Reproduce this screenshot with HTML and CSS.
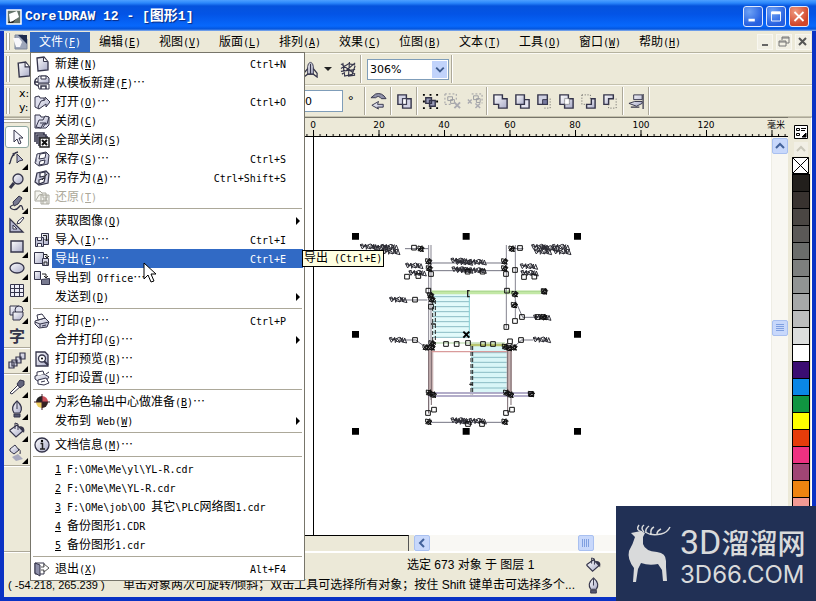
FILE: index.html
```html
<!DOCTYPE html>
<html lang="zh-CN">
<head>
<meta charset="utf-8">
<title>CorelDRAW 12 - [图形1]</title>
<link rel="stylesheet" href="styles.css">
</head>
<body>
<svg class="symbols" aria-hidden="true">
  <defs>
    <linearGradient id="metal" x1="0" y1="0" x2="1" y2="1"><stop offset="0" stop-color="#fff"/><stop offset="1" stop-color="#a9abc8"/></linearGradient>
  </defs>
  <symbol id="i-new" viewBox="0 0 16 16"><path d="M3 2l7-1 4 5v8l-10 1z" fill="url(#metal)" stroke="#34344a" stroke-width="1.300"/><path d="M9.500 1.500v4h4" fill="#fff" stroke="#34344a"/></symbol>
  <symbol id="i-template" viewBox="0 0 16 16"><path d="M5 1h8l2 2v5H4V2z" fill="url(#metal)" stroke="#34344a"/><path d="M7 1h5v3H7zM4 9h11v5H5z" fill="#fff" stroke="#34344a"/><path d="M7 14v-3h5v3M3 3Q0 5 1 9l3 2M1 7h3" fill="none" stroke="#34344a" stroke-width="1.500"/></symbol>
  <symbol id="i-open" viewBox="0 0 16 16"><path d="M1 3l4-1 1 2h4v4L5 15 1 13z" fill="#dedfee" stroke="#34344a"/><path d="M4 13L7 7l4-1V3l5 5-4 5v-3L5 15z" fill="url(#metal)" stroke="#34344a"/></symbol>
  <symbol id="i-close" viewBox="0 0 16 16"><path d="M1 2h5l1 2h8v8l-3 3H1z" fill="#dedfee" stroke="#34344a"/><path d="M2 14L5 7h4l2-4 4 1-2 7H9l-2 4z" fill="url(#metal)" stroke="#34344a"/><path d="M6 10h6l-3 4" fill="none" stroke="#34344a"/></symbol>
  <symbol id="i-closeall" viewBox="0 0 16 16"><path d="M1 10V1h9v2M3 12V3h9v2M5 14V5h9" fill="none" stroke="#34344a" stroke-width="1.600"/><path d="M6 6h9v9H6z" fill="#fff" stroke="#222" stroke-width="1.500"/><path d="M8 8l5 5M13 8l-5 5" stroke="#111" stroke-width="2"/></symbol>
  <symbol id="i-save" viewBox="0 0 16 16"><path d="M3 3l9-2 3 3-1 9-9 2-4-3z" fill="url(#metal)" stroke="#34344a"/><path d="M6 3l6-1-1 5-6 1zM6 10l5-1-1 4-5 1z" fill="#fff" stroke="#34344a"/><path d="M3 4L2 11" stroke="#77788f"/></symbol>
  <symbol id="i-saveas" viewBox="0 0 16 16"><path d="M3 3l9-2 3 3-1 9-9 2-4-3z" fill="#d0d1e2" stroke="#34344a" stroke-width="1.200"/><path d="M6 3l5-1v4l-5 1zM5 10l6-2-1 4-5 2z" fill="#fff" stroke="#34344a" stroke-width="1.200"/><path d="M8 10l5-6" stroke="#222"/></symbol>
  <symbol id="i-revert" viewBox="0 0 16 16"><path d="M1 2h5l2 2h4v8H1zM7 6h8v9H7zM9 6v3h4V6M9 15v-4h4v4M2 11l3-5 4-1" fill="#f3f3ee" stroke="#aaa99f"/></symbol>
  <symbol id="i-import" viewBox="0 0 16 16"><path d="M7.500 1.500h7v11h-7z" fill="url(#metal)" stroke="#34344a"/><path d="M1.500 5.500h8v9h-8z" fill="#c4c5d9" stroke="#34344a"/><path d="M3.500 5.500v3h4v-3M3.500 14.500v-3h4v3" fill="#fff" stroke="#34344a"/><path d="M9 3.500h3.500V9M10.500 7l2 2 2-2" fill="none" stroke="#222"/></symbol>
  <symbol id="i-export" viewBox="0 0 16 16"><path d="M.5 1.500h9v11h-9z" fill="url(#metal)" stroke="#34344a"/><path d="M8.500 7.500h6v7h-6z" fill="#d9d9e8" stroke="#34344a"/><path d="M10 14v-3h3v3M10 3.500h3V7M11 5l2 2 2-2" fill="none" stroke="#222"/></symbol>
  <symbol id="i-office" viewBox="0 0 16 16"><path d="M.5 1.500h6v8h-6z" fill="url(#metal)" stroke="#34344a"/><path d="M7.500 9.500l8-1v6h-8z" fill="#77798f" stroke="#34344a"/><path d="M8 4h4v3M10 6l2 2 2-2" fill="none" stroke="#222"/></symbol>
  <symbol id="i-print" viewBox="0 0 16 16"><path d="M1 8l10-3 4 4-2 5-8 1-4-4z" fill="url(#metal)" stroke="#34344a"/><path d="M4 7L3 2l5-1 3 4z" fill="#fff" stroke="#34344a"/><path d="M1 9l5 2 9-2M6 11v3M8 13l4-1" fill="none" stroke="#34344a"/></symbol>
  <symbol id="i-preview" viewBox="0 0 16 16"><path d="M2 1h9l3 3v11H2z" fill="url(#metal)" stroke="#34344a" stroke-width="1.300"/><circle cx="8" cy="7.500" r="3.500" fill="#fff" stroke="#34344a" stroke-width="1.300"/><path d="M10 10l4 4" stroke="#34344a" stroke-width="2"/><circle cx="8" cy="7.500" r="1"/></symbol>
  <symbol id="i-setup" viewBox="0 0 16 16"><path d="M1 6l9-2 5 3-3 4-7 1-4-3z" fill="url(#metal)" stroke="#34344a"/><path d="M3 6V2l6-1 1 3M4 10l8-2 3 5-5 2-6-1z" fill="#fff" stroke="#34344a"/><path d="M12 4l3-2M7 12l4-1" stroke="#34344a"/></symbol>
  <symbol id="i-color" viewBox="0 0 16 16"><circle cx="8" cy="8" r="5.500" fill="#fff"/><path d="M8 8V2a6 6 0 00-6 6z" fill="#222"/><path d="M8 8V2a6 6 0 016 6z" fill="#c94f58"/><path d="M8 8v6a6 6 0 006-6z" fill="#322"/><path d="M8 8v6a6 6 0 01-6-6z" fill="#edcf62"/><path d="M8 0v16M0 8h16" stroke="#42202a"/></symbol>
  <symbol id="i-info" viewBox="0 0 16 16"><circle cx="8" cy="8" r="7" fill="url(#metal)" stroke="#34344a" stroke-width="1.300"/><path d="M6.500 6.500h2V12M6 12h5" fill="none" stroke="#222" stroke-width="1.500"/><circle cx="8" cy="4" r="1.200"/></symbol>
  <symbol id="i-exit" viewBox="0 0 16 16"><path d="M1 2h9v11H1z" fill="#fff" stroke="#34344a"/><path d="M1 2l5 2v11l-5-3z" fill="#8d8fa9" stroke="#34344a"/><path d="M7 6h3V3l5 4-5 4V9H7" fill="#fff" stroke="#555"/></symbol>
  <symbol id="t-pick" viewBox="0 0 18 18"><path d="M6 2v12l3-3 2 5 2-1-2-5h4z" fill="#f4f4fb" stroke="#34344a"/></symbol>
  <symbol id="t-shape" viewBox="0 0 18 18"><path d="M2 13Q4 3 10 2M2 13l-1 1M6 6L5 3" fill="none" stroke="#34344a" stroke-width="1.300"/><path d="M9 4v9l2-2 4-1z" fill="#b5b7cf" stroke="#34344a"/></symbol>
  <symbol id="t-zoom" viewBox="0 0 18 18"><path d="M2 16l4-5" stroke="#34344a" stroke-width="3"/><circle cx="10" cy="7" r="5" fill="url(#metal)" stroke="#34344a" stroke-width="1.300"/></symbol>
  <symbol id="t-draw" viewBox="0 0 18 18"><path d="M5 8l6-6 3 2-4 6-4 2z" fill="#777990" stroke="#34344a"/><path d="M5 11q-5 2-1 4t7-2 4 3" fill="none" stroke="#34344a" stroke-width="1.300"/></symbol>
  <symbol id="t-smart" viewBox="0 0 18 18"><path d="M2 3v13h13z" fill="#b5b7cf" stroke="#34344a" stroke-width="1.300"/><path d="M5 9v4h4zM9 8l1-3 5-4 1 1-4 5z" fill="#fff" stroke="#34344a"/></symbol>
  <symbol id="t-rect" viewBox="0 0 18 18"><path d="M3 3h12v11H3z" fill="url(#metal)" stroke="#34344a" stroke-width="1.400"/></symbol>
  <symbol id="t-ellipse" viewBox="0 0 18 18"><ellipse cx="9" cy="8" rx="7" ry="5" fill="url(#metal)" stroke="#34344a" stroke-width="1.300"/></symbol>
  <symbol id="t-grid" viewBox="0 0 18 18"><path d="M2 2h13v13H2z" fill="#eeeef8"/><path d="M2.500 2.500h13v12h-13zM2 6.500h13M2 10.500h13M6.500 2v13M11.500 2v13" fill="none" stroke="#34344a"/></symbol>
  <symbol id="t-basic" viewBox="0 0 18 18"><path d="M2 2h9v9H2z" fill="url(#metal)" stroke="#34344a"/><circle cx="11" cy="6" r="4" fill="#dedfec" stroke="#34344a"/><path d="M5 8h10v4l-3 4H5z" fill="url(#metal)" stroke="#34344a"/></symbol>
  <symbol id="t-blend" viewBox="0 0 18 18"><path d="M1 10h5v6H1zM4 8h5v6H4zM8 5h5v6H8zM12 1h5v6h-5z" fill="url(#metal)" stroke="#34344a" stroke-width="1.200"/></symbol>
  <symbol id="t-dropper" viewBox="0 0 18 18"><path d="M2 15l9-9 2 2-9 8z" fill="#fff" stroke="#34344a"/><path d="M9 6l3-4 4 1v4l-4 3z" fill="#62647d" stroke="#34344a"/></symbol>
  <symbol id="t-pen" viewBox="0 0 18 18"><path d="M9 1Q2 7 6 13h6q4-6-3-12z" fill="url(#metal)" stroke="#34344a" stroke-width="1.200"/><path d="M9 2v7M6 14h6v3H6z" fill="#555870" stroke="#34344a"/></symbol>
  <symbol id="t-fill" viewBox="0 0 18 18"><path d="M2 8l7-5 6 6-7 6-6-6z" fill="url(#metal)" stroke="#34344a" stroke-width="1.200"/><path d="M7 7V1l3 1v6" fill="none" stroke="#34344a"/><path d="M11 4q7 0 5 7l-3-4z" fill="#34344a"/></symbol>
  <symbol id="t-ifill" viewBox="0 0 18 18"><path d="M2 5l5-4 4 5-5 4-4-3z" fill="url(#metal)" stroke="#34344a"/><path d="M10 5q3 0 2 5" fill="none" stroke="#34344a"/><path d="M4 13l6-3 5 5-7 2z" fill="#a7a9be"/></symbol>
  <symbol id="b-rocket" viewBox="0 0 18 18"><path d="M6 14V6q0-3 3-5 3 2 3 5v8z" fill="url(#metal)" stroke="#34344a"/><path d="M6 8l-4 5v4l4-3h6l4 3v-4l-4-5M9 3v11" fill="none" stroke="#34344a" stroke-width="1.300"/></symbol>
  <symbol id="b-web" viewBox="0 0 18 18"><path d="M1 3l15 11M2 14L16 2M1 8l8-5 7 1M3 2l2 14 8-2 3-9M10 1l-1 15 7-1M1 11l15-2" fill="none" stroke="#34344a" stroke-width="1.200"/></symbol>
  <symbol id="b-mirror" viewBox="0 0 18 18"><path d="M1 5l5-4q7-2 11 5h-5Q9 2 6 5z" fill="#8f91a8" stroke="#34344a"/><path d="M2 13l7-4-1 3h6v3H8l1 2z" fill="url(#metal)" stroke="#34344a"/></symbol>
  <symbol id="b-combine" viewBox="0 0 18 18"><path d="M2 2h9v10H2zM7 6h9v10H7z" fill="#d2d3e4" stroke="#34344a" stroke-width="1.500"/><path d="M7 6h4v6H7z" fill="#fff" stroke="#34344a"/></symbol>
  <symbol id="b-group" viewBox="0 0 18 18"><path d="M4 5h6v6H4zM8 8h6v6H8z" fill="#9a9cb8" stroke="#34344a" stroke-width="1.500"/><path d="M1 1h2v2H1zM8 1h2v2H8zM15 1h2v2h-2zM1 8h2v2H1zM15 8h2v2h-2zM1 15h2v2H1zM8 15h2v2H8zM15 15h2v2h-2z"/></symbol>
  <symbol id="b-ungroup" viewBox="0 0 18 18"><path d="M4 4h5v4H4zM7 7h4v4H7z" fill="none" stroke="#999aa0"/><path d="M1 1h12M1 12h8M1 1v11M13 1v7" stroke="#999aa0" stroke-dasharray="2 2" fill="none"/><path d="M11 10l6 6M17 10l-6 6" stroke="#aaaab0" stroke-width="2"/></symbol>
  <symbol id="b-ungroupall" viewBox="0 0 18 18"><path d="M8 3h5v4H8zM11 6h4v4h-4z" fill="none" stroke="#999aa0"/><path d="M6 1h11v10" stroke="#999aa0" stroke-dasharray="2 2" fill="none"/><path d="M2 7l4 4M6 7l-4 4M10 11l5 5M15 11l-5 5" stroke="#aaaab0" stroke-width="1.500"/></symbol>
  <symbol id="b-weld" viewBox="0 0 18 18"><path d="M2 2h9v4h5v10H7v-4H2z" fill="url(#metal)" stroke="#34344a" stroke-width="1.500"/></symbol>
  <symbol id="b-trim" viewBox="0 0 18 18"><path d="M7 7h9v9H7z" fill="#e4e4f0" stroke="#34344a" stroke-width="1.500"/><path d="M2 2h9v10H2z" fill="url(#metal)" stroke="#34344a" stroke-width="1.500"/></symbol>
  <symbol id="b-intersect" viewBox="0 0 18 18"><path d="M2 2h10v10H2z" fill="#cfd0e2" stroke="#34344a" stroke-width="1.500"/><path d="M7 7h5v5H7z" fill="#777aa0" stroke="#34344a"/><path d="M15 6v10H7" fill="none" stroke="#555" stroke-dasharray="1 2"/></symbol>
  <symbol id="b-simplify" viewBox="0 0 18 18"><path d="M2 2h9v4h5v10H7v-4H2z" fill="url(#metal)" stroke="#34344a" stroke-width="1.500"/><path d="M7 12V6h5v6z" fill="#fff" stroke="#555" stroke-dasharray="1 1"/></symbol>
  <symbol id="b-front" viewBox="0 0 18 18"><path d="M2 2h9v4M2 2v10h4" fill="none" stroke="#555" stroke-dasharray="1 2"/><path d="M12 6h4v10H7v-4h5z" fill="url(#metal)" stroke="#34344a" stroke-width="1.500"/></symbol>
  <symbol id="b-back" viewBox="0 0 18 18"><path d="M2 2h10v4H7v6H2z" fill="url(#metal)" stroke="#34344a" stroke-width="1.500"/><path d="M15 6v10H7v-4" fill="none" stroke="#555" stroke-dasharray="1 2"/></symbol>
  <symbol id="b-align" viewBox="0 0 18 18"><path d="M6 2h9v5H6zM1 11l6-2h8v2l-6 3z" fill="url(#metal)" stroke="#34344a"/><path d="M16 1v16M3 15h9" stroke="#34344a" stroke-width="1.300"/></symbol>
</svg>

<div class="window">
  <header class="titlebar">
    <svg class="app-icon" viewBox="0 0 16 16" aria-hidden="true"><path d="M1 1h14v14H1z" fill="#66746c" stroke="#fff" stroke-width="1.500"/><path d="M2 14l4-5 4 1-3 4z" fill="#222"/><path d="M3 5l8-3 2 6-6 4-3 1z" fill="#fff"/></svg>
    <h1>CorelDRAW 12 - [<span class="title-cjk">图形</span>1]</h1>
    <div class="caption-buttons">
      <button aria-label="最小化"><svg viewBox="0 0 20 20"><path d="M5 14h7" stroke="#fff" stroke-width="3"/></svg></button>
      <button aria-label="最大化"><svg viewBox="0 0 20 20"><path d="M5 5h10v10H5z" fill="none" stroke="#fff"/><path d="M5 6h10" stroke="#fff" stroke-width="3"/></svg></button>
      <button class="quit" aria-label="关闭"><svg viewBox="0 0 20 20"><path d="M5 5l10 10M15 5L5 15" stroke="#fff" stroke-width="2"/></svg></button>
    </div>
  </header>

  <div class="frame">
    <nav class="menubar" aria-label="主菜单">
      <span class="grip"></span>
      <svg class="doc-icon" viewBox="0 0 16 16" aria-hidden="true"><path d="M3 1h8l4 4v10H3z" fill="#9da6ba" stroke="#7d879b"/><path d="M6 1h9v9z" fill="#1f2c4e"/><path d="M1 4h6l3 4-2 5H4z" fill="#f7f7fb"/></svg>
      <button class="active">文件<i>(<u>F</u>)</i></button>
      <button>编辑<i>(<u>E</u>)</i></button>
      <button>视图<i>(<u>V</u>)</i></button>
      <button>版面<i>(<u>L</u>)</i></button>
      <button>排列<i>(<u>A</u>)</i></button>
      <button>效果<i>(<u>C</u>)</i></button>
      <button>位图<i>(<u>B</u>)</i></button>
      <button>文本<i>(<u>T</u>)</i></button>
      <button>工具<i>(<u>O</u>)</i></button>
      <button>窗口<i>(<u>W</u>)</i></button>
      <button>帮助<i>(<u>H</u>)</i></button>
      <div class="doc-buttons">
        <button aria-label="最小化文档"><svg viewBox="0 0 14 14"><path d="M4 10h6" stroke="#666" stroke-width="2"/></svg></button>
        <button aria-label="还原文档"><svg viewBox="0 0 14 14"><path d="M5 5V2h7v6H9M5 3h7M2 6h7v5H2zM2 7h7" fill="none" stroke="#777"/></svg></button>
        <button aria-label="关闭文档"><svg viewBox="0 0 14 14"><path d="M3 3l7 7M10 3l-7 7" stroke="#555" stroke-width="2"/></svg></button>
      </div>
    </nav>

    <div class="toolbar standard" role="toolbar" aria-label="标准">
      <span class="grip"></span>
      <button class="tb" aria-label="新建"><svg><use href="#i-new"/></svg></button>
      <span class="covered"></span>
      <button class="tb" aria-label="应用程序启动器"><svg><use href="#b-rocket"/></svg></button>
      <span class="caret"></span>
      <button class="tb" aria-label="CorelDRAW 网上社区"><svg><use href="#b-web"/></svg></button>
      <span class="rule"></span>
      <span class="zoom-level"><select aria-label="缩放级别"><option>306%</option></select><svg viewBox="0 0 15 18" aria-hidden="true"><path d="M4 7l4 4 4-4" fill="none" stroke="#3c5a8c" stroke-width="2"/></svg></span>
      <span class="rule end"></span>
    </div>

    <div class="toolbar property" role="toolbar" aria-label="属性栏">
      <span class="grip"></span>
      <span class="coords"><span>x:</span><span>y:</span></span>
      <span class="covered"></span>
      <input type="text" id="angle" value="0" aria-label="旋转角度"><label for="angle">°</label>
      <span class="rule"></span>
      <button class="tb" aria-label="镜像"><svg><use href="#b-mirror"/></svg></button>
      <span class="rule"></span>
      <button class="tb" aria-label="结合"><svg><use href="#b-combine"/></svg></button>
      <span class="rule"></span>
      <button class="tb" aria-label="群组"><svg><use href="#b-group"/></svg></button>
      <button class="tb" aria-label="取消群组" disabled><svg><use href="#b-ungroup"/></svg></button>
      <button class="tb" aria-label="取消全部群组" disabled><svg><use href="#b-ungroupall"/></svg></button>
      <span class="rule"></span>
      <button class="tb" aria-label="焊接"><svg><use href="#b-weld"/></svg></button>
      <button class="tb" aria-label="修剪"><svg><use href="#b-trim"/></svg></button>
      <button class="tb" aria-label="相交"><svg><use href="#b-intersect"/></svg></button>
      <button class="tb" aria-label="简化"><svg><use href="#b-simplify"/></svg></button>
      <button class="tb" aria-label="前减后"><svg><use href="#b-front"/></svg></button>
      <button class="tb" aria-label="后减前"><svg><use href="#b-back"/></svg></button>
      <span class="rule"></span>
      <button class="tb" aria-label="对齐"><svg><use href="#b-align"/></svg></button>
      <span class="rule end"></span>
    </div>

    <main class="workspace">
      <aside class="toolbox" aria-label="工具箱">
        <span class="grip-top"></span>
        <button class="selected" aria-label="挑选"><svg><use href="#t-pick"/></svg></button>
        <button class="fly" aria-label="形状"><svg><use href="#t-shape"/></svg></button>
        <button class="fly" aria-label="缩放"><svg><use href="#t-zoom"/></svg></button>
        <button class="fly" aria-label="手绘"><svg><use href="#t-draw"/></svg></button>
        <button aria-label="智能绘图"><svg><use href="#t-smart"/></svg></button>
        <button class="fly" aria-label="矩形"><svg><use href="#t-rect"/></svg></button>
        <button class="fly" aria-label="椭圆"><svg><use href="#t-ellipse"/></svg></button>
        <button class="fly" aria-label="图纸"><svg><use href="#t-grid"/></svg></button>
        <button class="fly" aria-label="基本形状"><svg><use href="#t-basic"/></svg></button>
        <button class="glyph" aria-label="文本">字</button>
        <hr>
        <button class="fly" aria-label="调和"><svg><use href="#t-blend"/></svg></button>
        <hr>
        <button class="fly" aria-label="滴管"><svg><use href="#t-dropper"/></svg></button>
        <button class="fly" aria-label="轮廓"><svg><use href="#t-pen"/></svg></button>
        <button class="fly" aria-label="填充"><svg><use href="#t-fill"/></svg></button>
        <button class="fly" aria-label="交互式填充"><svg><use href="#t-ifill"/></svg></button>
        <hr>
      </aside>

      <section class="view">
        <div class="ruler">
          <svg width="758" height="20" aria-hidden="true">
            <defs>
              <pattern id="minor" x="283" width="6.550" height="20" patternUnits="userSpaceOnUse"><path d="M.5 16v3" stroke="#000"/></pattern>
              <pattern id="major" x="283" width="65.500" height="20" patternUnits="userSpaceOnUse"><path d="M.5 12v7" stroke="#000"/></pattern>
            </defs>
            <path d="M0 0h758v20H0z" fill="url(#minor)"/><path d="M0 0h758v20H0z" fill="url(#major)"/>
            <g class="ruler-text"><text x="283" y="10">0</text><text x="349" y="10">20</text><text x="414" y="10">40</text><text x="480" y="10">60</text><text x="545" y="10">80</text><text x="611" y="10">100</text><text x="676" y="10">120</text><text x="746" y="10">毫米</text></g>
          </svg>
        </div>
        <div class="canvas-row">
          <div class="canvas">
            <svg width="741" height="398" viewBox="30 137 741 398" role="img" aria-label="选定的图形">
              <defs>
                <path id="node" d="M-7-7H7V7H-7z"/>
                <path id="scrib" d="M0 3l8-2 3 10 6-10 2 16 6-12 7 11 2-15 8 15 5-13 6 15-16-4 4-12-9 14-11-4-5-9-9 13-6-12 12 5 18-8 14 11"/>
                <path id="knot" d="M-9-8l17 4-14 5 14 7-17-2 12-15 3 17-11-9 15-1-11 11-8-8z"/>
              </defs>
              <path d="M313.500 137v398" stroke="#000"/>
              <g transform="translate(340 220) scale(.33333)">
                <path d="M278 220h110v132H278z" fill="#e2fafa"/><path d="M393 375h108v143H393z" fill="#d9f6f7"/>
                <path d="M278 230h110M278 245h110M278 260h110M278 275h110M278 290h110M278 305h110M278 320h110M278 337h110M278 352h110M393 398h108M393 412h108M393 427h108M393 442h108M393 457h108M393 473h108M393 488h108M393 504h108" stroke="#8bbcc4" stroke-width="3"/>
                <path d="M388 220v132" stroke="#83d0d5" stroke-width="3"/>
                <path d="M272 217h330" stroke="#c3e8a6" stroke-width="11"/><path d="M272 214h330" stroke="#9fcf85" stroke-width="2"/>
                <path d="M390 375h110" stroke="#b8c46c" stroke-width="7"/><path d="M275 369h220" stroke="#a9cf9a" stroke-width="3"/>
                <path d="M266 75v505M273 75v465M499 75v250M526 75v220" stroke="#85838f" stroke-width="3" fill="none"/>
                <path d="M272 385v135M508 385v135" stroke="#c9b3b3" stroke-width="16"/><path d="M266 385v195M274 385v170M503 370v210M513 385v170" stroke="#77676c" stroke-width="3"/>
                <path d="M275 395h226" stroke="#d99b9b" stroke-width="4"/><path d="M266 519h310M266 528h310" stroke="#9b93b8" stroke-width="4"/>
                <path d="M270 129h230M275 152h220M266 607h228M195 86h70M510 86h40M187 240h75M187 360h40l30 22M580 360h-35l-25 22M590 292h-42l-22-50" stroke="#747482" stroke-width="3" fill="none"/>
                <path d="M278 225v145M286 240v135M393 378v145M398 378v145" stroke="#222" stroke-width="3" stroke-dasharray="12 6" fill="none"/>
                <path d="M389 212h-6v18h6M388 493h10M273 312h14" stroke="#222" stroke-width="4" fill="none"/>
                <g fill="none" stroke="#2c2c34" stroke-width="3">
                  <use href="#scrib" x="60" y="71"/><use href="#scrib" x="98" y="74"/><use href="#scrib" x="127" y="86"/><use href="#scrib" x="122" y="72"/>
                  <use href="#scrib" x="574" y="72"/><use href="#scrib" x="600" y="76"/><use href="#scrib" x="636" y="72"/><use href="#scrib" x="582" y="86"/><use href="#scrib" x="640" y="86"/>
                  <use href="#scrib" x="332" y="113"/><use href="#scrib" x="345" y="118"/><use href="#scrib" x="386" y="117"/><use href="#scrib" x="335" y="139"/><use href="#scrib" x="346" y="142"/><use href="#scrib" x="386" y="142"/>
                  <use href="#scrib" x="196" y="128"/><use href="#scrib" x="206" y="150"/><use href="#scrib" x="540" y="130"/><use href="#scrib" x="542" y="150"/>
                  <use href="#scrib" x="148" y="230"/><use href="#scrib" x="147" y="351"/><use href="#scrib" x="579" y="350"/><use href="#scrib" x="580" y="283"/>
                  <use href="#scrib" x="332" y="592"/><use href="#scrib" x="342" y="596"/><use href="#scrib" x="386" y="594"/>
                </g>
                <g fill="none" stroke="#111" stroke-width="3">
                  <use href="#knot" x="613" y="214"/><use href="#knot" x="574" y="522"/><use href="#knot" x="612" y="291"/>
                  <use href="#knot" x="266" y="124"/><use href="#knot" x="268" y="145"/><use href="#knot" x="494" y="124"/><use href="#knot" x="494" y="145"/>
                  <use href="#knot" x="243" y="86"/><use href="#knot" x="516" y="86"/><use href="#knot" x="272" y="226"/><use href="#knot" x="276" y="238"/>
                  <use href="#knot" x="525" y="222"/><use href="#knot" x="523" y="255"/><use href="#knot" x="258" y="382"/><use href="#knot" x="276" y="382"/><use href="#knot" x="276" y="370"/>
                  <use href="#knot" x="496" y="380"/><use href="#knot" x="508" y="384"/><use href="#knot" x="522" y="382"/><use href="#knot" x="268" y="518"/><use href="#knot" x="280" y="524"/><use href="#knot" x="500" y="518"/><use href="#knot" x="512" y="524"/>
                  <use href="#knot" x="266" y="605"/><use href="#knot" x="495" y="605"/>
                </g>
                <g fill="none" stroke="#111" stroke-width="3">
                  <use href="#node" x="222" y="83"/><use href="#node" x="540" y="84"/><use href="#node" x="201" y="170"/><use href="#node" x="235" y="168"/><use href="#node" x="273" y="162"/><use href="#node" x="498" y="162"/><use href="#node" x="525" y="150"/><use href="#node" x="552" y="171"/><use href="#node" x="583" y="170"/>
                  <use href="#node" x="265" y="212"/><use href="#node" x="501" y="212"/><use href="#node" x="225" y="239"/><use href="#node" x="273" y="260"/><use href="#node" x="525" y="303"/><use href="#node" x="499" y="321"/><use href="#node" x="546" y="291"/><use href="#node" x="594" y="291"/>
                  <use href="#node" x="225" y="360"/><use href="#node" x="543" y="360"/><use href="#node" x="510" y="364"/><use href="#node" x="318" y="372"/><use href="#node" x="350" y="372"/><use href="#node" x="384" y="369"/><use href="#node" x="429" y="372"/><use href="#node" x="459" y="372"/>
                  <use href="#node" x="383" y="155"/><use href="#node" x="428" y="155"/><use href="#node" x="282" y="569"/><use href="#node" x="264" y="579"/><use href="#node" x="516" y="569"/><use href="#node" x="498" y="579"/><use href="#node" x="384" y="612"/><use href="#node" x="426" y="612"/><use href="#node" x="613" y="214"/><use href="#node" x="574" y="522"/>
                </g>
                <path d="M370 335l18 18M388 335l-18 18" stroke="#000" stroke-width="6"/>
                <path d="M36 39h21v20H36zM368 39h21v20h-21zM702 39h21v20h-21zM36 333h21v20H36zM702 333h21v20h-21zM36 624h21v20H36zM368 624h21v20h-21zM702 624h21v20h-21z"/>
              </g>
            </svg>
          </div>
          <div class="vscroll">
            <button aria-label="向上滚动"><svg viewBox="0 0 14 14"><path d="M3 9l4-4 4 4" fill="none" stroke="#43629a" stroke-width="2"/></svg></button>
            <span class="thumb"><svg viewBox="0 0 14 14"><path d="M3 3.500h8M3 5.500h8M3 7.500h8M3 9.500h8" stroke="#7f9fe0"/></svg></span>
          </div>
        </div>
        <div class="bottom-row">
          <div class="page-tabs"></div>
          <div class="hscroll">
            <button aria-label="向左滚动"><svg viewBox="0 0 14 14"><path d="M9 3L5 7l4 4" fill="none" stroke="#43629a" stroke-width="2"/></svg></button>
            <span class="thumb"><svg viewBox="0 0 14 14"><path d="M3.500 3v8M5.500 3v8M7.500 3v8M9.500 3v8" stroke="#7f9fe0"/></svg></span>
          </div>
        </div>
      </section>

      <aside class="palette" aria-label="调色板">
        <button class="pal-menu" aria-label="调色板菜单"><svg viewBox="0 0 14 14"><path d="M.5.5h13v13H.5z" fill="#fff" stroke="#000"/><path d="M2.500 3.500h3v2h-3zM2.500 8.500h3v2h-3z" fill="none" stroke="#000"/><path d="M7 3.500h5M7 5.500h4M8 12l4-4v4z" fill="#000" stroke="#000"/></svg></button>
        <button class="pal-up" aria-label="向上"><svg viewBox="0 0 14 14"><path d="M3 9l4-4 4 4" fill="none" stroke="#c9c7ba" stroke-width="2"/></svg></button>
        <button class="pal-none" aria-label="无填充"><svg viewBox="0 0 17 17"><path d="M.5.500h16v16H.5zM.5.500l16 16M16.500.500l-16 16" fill="#fff" stroke="#000"/></svg></button>
        <button class="swatch s1" aria-label="90% 黑"></button><button class="swatch s2" aria-label="80% 黑"></button><button class="swatch s3" aria-label="70% 黑"></button><button class="swatch s4" aria-label="60% 黑"></button><button class="swatch s5" aria-label="50% 黑"></button><button class="swatch s6" aria-label="40% 黑"></button><button class="swatch s7" aria-label="30% 黑"></button><button class="swatch s8" aria-label="20% 黑"></button><button class="swatch s9" aria-label="15% 黑"></button><button class="swatch s10" aria-label="10% 黑"></button><button class="swatch s11" aria-label="白"></button><button class="swatch s12" aria-label="蓝紫"></button><button class="swatch s13" aria-label="青"></button><button class="swatch s14" aria-label="绿"></button><button class="swatch s15" aria-label="黄"></button><button class="swatch s16" aria-label="红"></button><button class="swatch s17" aria-label="洋红"></button><button class="swatch s18" aria-label="紫"></button><button class="swatch s19" aria-label="橙"></button><button class="swatch s20" aria-label="粉"></button>
      </aside>
    </main>

    <footer class="statusbar">
      <div class="status-row"><span class="selection">选定 673 对象 于 图层 1</span><svg><use href="#t-fill"/></svg></div>
      <div class="status-row"><span class="position">( -54.218, 265.239 )</span><span class="hint">单击对象两次可旋转/倾斜；双击工具可选择所有对象；按住 Shift 键单击可选择多个...</span><svg><use href="#t-pen"/></svg></div>
    </footer>
  </div>

  <div class="menu" role="menu">
    <button><svg><use href="#i-new"/></svg><span>新建<i>(<u>N</u>)</i></span><kbd>Ctrl+N</kbd></button>
    <button><svg><use href="#i-template"/></svg><span>从模板新建<i>(<u>F</u>)</i>⋯</span></button>
    <button><svg><use href="#i-open"/></svg><span>打开<i>(<u>O</u>)</i>⋯</span><kbd>Ctrl+O</kbd></button>
    <button><svg><use href="#i-close"/></svg><span>关闭<i>(<u>C</u>)</i></span></button>
    <button><svg><use href="#i-closeall"/></svg><span>全部关闭<i>(<u>S</u>)</i></span></button>
    <button><svg><use href="#i-save"/></svg><span>保存<i>(<u>S</u>)</i>⋯</span><kbd>Ctrl+S</kbd></button>
    <button><svg><use href="#i-saveas"/></svg><span>另存为<i>(<u>A</u>)</i>⋯</span><kbd>Ctrl+Shift+S</kbd></button>
    <button disabled><svg><use href="#i-revert"/></svg><span>还原<i>(<u>T</u>)</i></span></button>
    <hr>
    <button class="sub"><svg></svg><span>获取图像<i>(<u>Q</u>)</i></span></button>
    <button><svg><use href="#i-import"/></svg><span>导入<i>(<u>I</u>)</i>⋯</span><kbd>Ctrl+I</kbd></button>
    <button class="hot"><svg><use href="#i-export"/></svg><span>导出<i>(<u>E</u>)</i>⋯</span><kbd>Ctrl+E</kbd></button>
    <button><svg><use href="#i-office"/></svg><span>导出到<i> Office</i>⋯</span></button>
    <button class="sub"><svg></svg><span>发送到<i>(<u>D</u>)</i></span></button>
    <hr>
    <button><svg><use href="#i-print"/></svg><span>打印<i>(<u>P</u>)</i>⋯</span><kbd>Ctrl+P</kbd></button>
    <button class="sub"><svg></svg><span>合并打印<i>(<u>G</u>)</i>⋯</span></button>
    <button><svg><use href="#i-preview"/></svg><span>打印预览<i>(<u>R</u>)</i>⋯</span></button>
    <button><svg><use href="#i-setup"/></svg><span>打印设置<i>(<u>U</u>)</i>⋯</span></button>
    <hr>
    <button><svg><use href="#i-color"/></svg><span>为彩色输出中心做准备<i>(<u>B</u>)</i>⋯</span></button>
    <button class="sub"><svg></svg><span>发布到<i> Web(<u>W</u>)</i></span></button>
    <hr>
    <button><svg><use href="#i-info"/></svg><span>文档信息<i>(<u>M</u>)</i>⋯</span></button>
    <hr>
    <button><svg></svg><span><i><u>1</u> F:\OMe\Me\yl\YL-R.cdr</i></span></button>
    <button><svg></svg><span><i><u>2</u> F:\OMe\Me\YL-R.cdr</i></span></button>
    <button><svg></svg><span><i><u>3</u> F:\OMe\job\OO </i>其它<i>\PLC</i>网络图<i>1.cdr</i></span></button>
    <button><svg></svg><span><i><u>4</u> </i>备份图形<i>1.CDR</i></span></button>
    <button><svg></svg><span><i><u>5</u> </i>备份图形<i>1.cdr</i></span></button>
    <hr>
    <button><svg><use href="#i-exit"/></svg><span>退出<i>(<u>X</u>)</i></span><kbd>Alt+F4</kbd></button>
  </div>
  <div class="tooltip" role="tooltip">导出<i> (Ctrl+E)</i></div>
  <svg class="cursor" viewBox="0 0 13 21" aria-hidden="true"><path d="M1 1v16l4-4 3 7 3-1-3-7h5z" fill="#fff" stroke="#000"/></svg>

  <div class="watermark">
    <svg viewBox="0 0 46 60" aria-hidden="true"><path d="M4 9l10-2 4 2-2 4v7q2 7 14 8 9 1 9 9v6l1 14h-4l-1-11-4-6q-9 2-17-1l-3 6-2 13H6l1-14Q0 35 2 27q4-7 6-14z" fill="#d9dadb"/><path d="M15 8Q8 6 12 1M17 8q-4-4 0-7M19 8q-1-3 3-6M18 8q6 4 16 2 6-1 9-7M24 10q-1-5 3-7M30 10q0-3 4-5" fill="none" stroke="#d9dadb" stroke-width="1.500"/></svg>
    <div class="brand"><span class="brand-name"><b>3D</b>溜溜网</span><span class="brand-url">3D66.COM</span></div>
  </div>
</div>
</body>
</html>
```
FILE: styles.css
```css
* { box-sizing: border-box; }
body { margin: 0; background: #ece9d8; color: #000; font: 12px/16px "Liberation Sans", "Noto Sans CJK SC", sans-serif; }
button { margin: 0; padding: 0; border: 0; background: none; color: inherit; font: inherit; }
svg { display: block; flex: none; }
hr { margin: 0; border: 0; }
.symbols { position: absolute; width: 0; height: 0; }
i, kbd { font-family: "DejaVu Sans Mono", monospace; font-size: 10px; font-style: normal; white-space: pre; }

.window { position: relative; display: flex; flex-direction: column; min-height: 100vh; overflow: hidden; }
.titlebar { display: flex; align-items: center; height: 31px; padding: 2px 7px 0 6px; background: linear-gradient(#4da0ff 0, #2a86fb 3px, #0553dd 6px, #0354e6 14px, #0768fc 26px, #0455dc 29px, #8fb5ee 31px); color: #fff; }
.app-icon { width: 16px; height: 16px; }
h1 { flex: 1; margin: 0 0 0 3px; font: bold 13px/20px "Liberation Mono", "Noto Sans CJK SC", monospace; text-shadow: 1px 1px 1px #0a2a80; white-space: pre; }
.title-cjk { font-size: 14px; }
.caption-buttons { display: flex; gap: 3px; }
.caption-buttons button { width: 20px; height: 21px; border: 1px solid #dfe9fd; border-radius: 3px; background: radial-gradient(circle at 30% 25%, #6ea2f5, #2660e0 70%); }
.caption-buttons .quit { background: radial-gradient(circle at 30% 25%, #ef9a80, #d1462a 70%); }
.caption-buttons svg { width: 18px; height: 19px; }

.frame { flex: 1; display: flex; flex-direction: column; border: solid #0a32c4; border-width: 0 4px 4px; }

.grip { flex: none; width: 4px; align-self: stretch; margin: 2px 0; border: solid #aca899; border-width: 0 1px; background: #fff; }
.menubar { display: flex; align-items: center; height: 22px; padding-left: 2px; border-bottom: 1px solid #b5b29f; }
.doc-icon { width: 16px; height: 16px; margin: 0 2px; }
.menubar > button { width: 60px; height: 20px; padding-top: 1px; white-space: nowrap; }
.menubar .active { background: #316ac5; color: #fff; }
.doc-buttons { display: flex; gap: 3px; margin-left: auto; padding-right: 1px; }
.doc-buttons button { width: 16px; height: 16px; border: 1px solid #f8f7f0; background: #f1efe4; }
.doc-buttons svg { width: 14px; height: 14px; }

.toolbar { display: flex; align-items: center; height: 32px; padding-left: 2px; border-top: 1px solid #fbfaf4; border-bottom: 1px solid #c5c2ae; }
.tb { flex: none; width: 22px; height: 22px; display: grid; place-items: center; }
.tb svg { width: 17px; height: 17px; }
.rule { flex: none; width: 2px; height: 28px; margin: 0 1px; border-left: 1px solid #aca899; background: #fff; }
.covered { flex: none; }
.standard .grip + .tb { margin-left: 2px; }
.standard .covered { width: 265px; }
.caret { margin: 0 5px 0 3px; border: solid transparent; border-width: 4px 4px 0; border-top-color: #222; }
.zoom-level { position: relative; display: flex; margin: 0 1px 0 4px; }
.zoom-level select { width: 82px; height: 21px; padding: 0 2px; appearance: none; border: 1px solid #7f9db9; border-radius: 0; background: #fff; color: #000; font: 11px "DejaVu Sans", sans-serif; }
.zoom-level svg { position: absolute; right: 2px; top: 2px; width: 15px; height: 17px; background: #c1d3fb; pointer-events: none; }
.property .coords { display: flex; flex-direction: column; width: 14px; margin-left: 9px; font: 11px/14px "DejaVu Sans", sans-serif; }
.property .covered { width: 237px; }
.property input { width: 73px; height: 22px; padding: 0 0 0 34px; border: 1px solid #7f9db9; background: #fff; font: 11px "DejaVu Sans", sans-serif; }
.property label { width: 20px; padding-left: 5px; font-size: 14px; }

.workspace { flex: 1; display: grid; grid-template-columns: 26px minmax(0, 1fr) 24px; min-height: 0; }
.toolbox { display: flex; flex-direction: column; align-items: center; border-top: 1px solid #aca899; border-bottom: 1px solid #aca899; }
.grip-top { align-self: stretch; height: 4px; margin: 1px 0 3px; border: solid #aca899; border-width: 1px 0; background: #fff; }
.toolbox button { position: relative; width: 24px; height: 22px; display: grid; place-items: center; }
.toolbox svg { width: 18px; height: 18px; }
.toolbox .selected { border: 1px solid #8fa8a0; border-radius: 3px; background: #fff; }
.toolbox .fly::after { content: ""; position: absolute; right: 1px; bottom: 0; border: 3px solid; border-color: transparent #000 #000 transparent; }
.toolbox .glyph { font: bold 16px/22px "Noto Sans CJK SC", sans-serif; color: #34344a; }
.toolbox hr { align-self: stretch; height: 2px; margin: 1px 0; border-top: 1px solid #aca899; background: #fff; }

.view { display: flex; flex-direction: column; min-width: 0; }
.ruler { height: 20px; overflow: hidden; border-top: 1px solid #77756a; border-bottom: 1px solid #000; }
.ruler-text { font: 9px "DejaVu Sans", "Noto Sans CJK SC", sans-serif; text-anchor: middle; }
.canvas-row { flex: 1; display: flex; min-height: 0; }
.canvas { flex: 1; min-width: 0; overflow: hidden; background: #fff; }
.vscroll { display: flex; flex-direction: column; align-items: center; justify-content: space-between; width: 17px; padding-top: 1px; background: #f8f7f2; border-left: 1px solid #eeede5; }
.vscroll button, .hscroll button, .thumb { display: grid; place-items: center; width: 16px; height: 16px; border: 1px solid #a9c0f0; border-radius: 2px; background: #c8d8fb; }
.vscroll svg, .hscroll svg { width: 14px; height: 14px; }
.vscroll::after { content: ""; height: 34px; }
.bottom-row { display: flex; height: 17px; border-bottom: 1px solid #fff; }
.page-tabs { flex: 0 0 50%; border-top: 1px solid #000; border-right: 1px solid #555; }
.hscroll { flex: 1; display: flex; align-items: center; justify-content: space-between; padding-left: 5px; background: linear-gradient(90deg, #ece9d8 5px, #f9f8f4 5px); }
.hscroll::after { content: ""; width: 46px; }

.palette { display: flex; flex-direction: column; align-items: center; min-height: 0; overflow: hidden; padding-top: 7px; padding-right: 2px; padding-left: 4px; border-top: 1px solid #aca899; border-right: 1px solid #fff; background: #ece9d8; }
.pal-menu svg, .pal-up svg { width: 14px; height: 14px; }
.pal-up { margin: 3px 0 1px; background: #f1efe5; }
.pal-none svg { width: 17px; height: 17px; }
.swatch { flex: none; width: 18px; height: 17px; border: solid #000; border-width: 1px 1px 0; }
.s1 { background: #221f1c; } .s2 { background: #38322f; } .s3 { background: #4a4643; } .s4 { background: #5b5957; } .s5 { background: #6b6d6b; }
.s6 { background: #7d7f7e; } .s7 { background: #919493; } .s8 { background: #a6a8a8; } .s9 { background: #bcbdbd; } .s10 { background: #dcdedd; }
.s11 { background: #fff; } .s12 { background: #3b0d72; } .s13 { background: #0a87e6; } .s14 { background: #109541; } .s15 { background: #ff0; }
.s16 { background: #e63c0a; } .s17 { background: #ee3181; } .s18 { background: #a04575; } .s19 { background: #ee8410; } .s20 { background: #f29a94; }

.statusbar { height: 45px; padding-top: 2px; border-top: 1px solid #fff; }
.status-row { display: flex; align-items: center; height: 20px; white-space: nowrap; }
.status-row svg { width: 17px; height: 17px; }
.selection { width: 178px; margin-left: 403px; }
.position { width: 115px; padding-left: 4px; font-size: 11px; }
.hint { width: 466px; padding-left: 4px; }

.menu { position: absolute; left: 30px; top: 52px; width: 275px; padding: 1px 1px 2px; border: 1px solid #77756a; background: #fff; }
.menu button { position: relative; display: flex; align-items: center; width: 100%; height: 19px; padding: 0 17px 0 2px; text-align: left; white-space: nowrap; }
.menu svg { width: 16px; height: 16px; }
.menu span { flex: 1; margin-left: 2px; padding: 2px 0 0 3px; line-height: 17px; }
.menu kbd { padding-top: 2px; line-height: 17px; }
.menu button:disabled { color: #aca899; }
.menu hr { height: 5px; margin: 0 1px; border: solid #fff; border-width: 2px 0; background: #aca899; }
.menu .hot { color: #fff; background: linear-gradient(90deg, #fff 20px, #316ac5 20px); }
.menu .sub::after { content: ""; position: absolute; right: 3px; top: 6px; border: solid transparent; border-width: 4px 0 4px 4px; border-left-color: #000; }
.tooltip { position: absolute; left: 302px; top: 250px; height: 17px; padding: 0 1px; border: 1px solid #000; background: #ffffe1; line-height: 15px; white-space: nowrap; }
.cursor { position: absolute; left: 143px; top: 262px; width: 13px; height: 21px; }

.watermark { position: absolute; right: 0; bottom: 0; display: flex; align-items: center; gap: 7px; width: 200px; height: 95px; padding-left: 11px; background: #213055; color: #d9dadb; }
.watermark svg { width: 46px; height: 60px; }
.brand { display: flex; flex-direction: column; }
.brand-name { display: flex; align-items: center; height: 42px; font: 500 28px/40px "Noto Sans CJK SC", sans-serif; white-space: nowrap; }
.brand-name b { font: 34px/40px Roboto, sans-serif; }
.brand-url { font: 24px/24px Inter, sans-serif; }
```
